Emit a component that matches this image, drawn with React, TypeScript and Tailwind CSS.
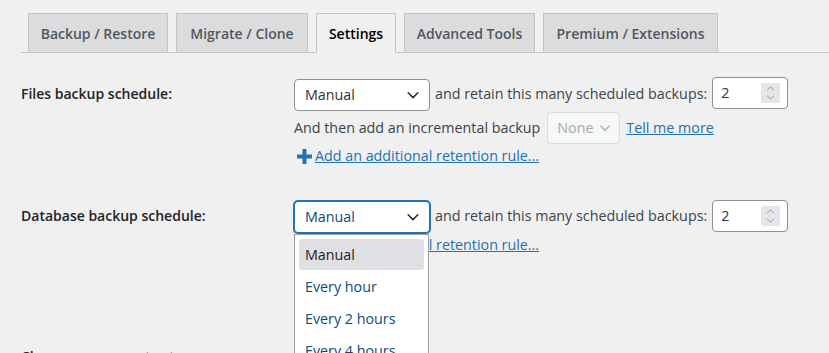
import React from "react";

const tabs = [
  { label: "Backup / Restore", w: "w-[140px]" },
  { label: "Migrate / Clone", w: "w-[132px]" },
  { label: "Settings", w: "w-[80px]", active: true },
  { label: "Advanced Tools", w: "w-[131px]" },
  { label: "Premium / Extensions", w: "w-[175px]" },
];

const Chevron = ({ className = "" }: { className?: string }) => (
  <svg viewBox="0 0 16 16" className={className} fill="none">
    <path d="M2.5 5.5 8 11l5.5-5.5" stroke="currentColor" strokeWidth="1.8" strokeLinecap="round" strokeLinejoin="round" />
  </svg>
);

const FakeSelect = ({ value, focused = false }: { value: string; focused?: boolean }) => (
  <div
    className={
      focused
        ? "flex items-center justify-between w-[136px] h-[32px] pl-[10px] pr-[9px] rounded-[4px] bg-white border border-[#2271b1] shadow-[0_0_0_1px_#2271b1] text-[#0a4b78]"
        : "flex items-center justify-between w-[136px] h-[32px] pl-[10px] pr-[9px] rounded-[4px] bg-white border border-[#8c8f94] text-[#2c3338]"
    }
  >
    <span>{value}</span>
    <Chevron className="w-[14px] h-[14px] text-[#2c3338]" />
  </div>
);

const NumberInput = () => (
  <div className="flex items-center justify-between w-[76px] h-[32px] pl-[8px] pr-[7px] rounded-[4px] bg-white border border-[#8c8f94] text-[#2c3338]">
    <span>2</span>
    <div className="flex flex-col items-center justify-center gap-[1px] w-[19px] h-[20px] bg-[#e6e6ea] text-[#8c8f94]">
      <svg viewBox="0 0 10 6" className="w-[9px] h-[5px]" fill="none">
        <path d="M1 5 5 1l4 4" stroke="currentColor" strokeWidth="1.2" />
      </svg>
      <svg viewBox="0 0 10 6" className="w-[9px] h-[5px] mt-[3px]" fill="none">
        <path d="M1 1l4 4 4-4" stroke="currentColor" strokeWidth="1.2" />
      </svg>
    </div>
  </div>
);

const PlusIcon = () => (
  <svg viewBox="0 0 15 15" className="w-[15px] h-[15px] text-[#2271b1]">
    <rect x="5.5" y="0" width="4" height="15" fill="currentColor" />
    <rect x="0" y="5.5" width="15" height="4" fill="currentColor" />
  </svg>
);

const options = ["Manual", "Every hour", "Every 2 hours", "Every 4 hours"];

export default function App() {
  return (
    <div className="h-[353px] overflow-hidden bg-[#f0f0f1] text-[14.3px] text-[#3c434a] font-['Open_Sans',sans-serif]">
      {/* tabs */}
      <nav className="ml-[21px] pt-[13px] pl-[7px] flex gap-[8px] border-b border-[#c3c4c7] text-[14px]">
        {tabs.map((t) =>
          t.active ? (
            <div
              key={t.label}
              className={`${t.w} h-[40px] -mb-px flex items-center justify-center border border-[#c3c4c7] border-b-[#f0f0f1] bg-[#f0f0f1] text-black font-semibold`}
            >
              {t.label}
            </div>
          ) : (
            <div
              key={t.label}
              className={`${t.w} h-[39px] flex items-center justify-center border border-b-0 border-[#c3c4c7] bg-[#dcdcde] text-[#50575e] font-semibold`}
            >
              {t.label}
            </div>
          )
        )}
      </nav>

      <div className="pl-[21px]">
        {/* Files backup schedule */}
        <div className="flex mt-[24px]">
          <div className="w-[273px] pt-[7px] leading-[20px] text-[14px] font-semibold text-[#1d2327]">Files backup schedule:</div>
          <div className="flex flex-col">
            <div className="flex items-start h-[34px]">
              <div className="mt-[2px]">
                <FakeSelect value="Manual" />
              </div>
              <span className="ml-[5px] mt-[1px] leading-[32px]">and retain this many scheduled backups:</span>
              <div className="ml-[5px]">
                <NumberInput />
              </div>
            </div>
            <div className="flex items-center h-[32px] mt-[1px]">
              <span>And then add an incremental backup</span>
              <div className="ml-[7px] flex items-center justify-between w-[73px] h-[32px] pl-[9px] pr-[8px] rounded-[4px] bg-[#f6f7f7] border border-[#dcdcde] text-[#a7aaad]">
                <span>None</span>
                <Chevron className="w-[12px] h-[12px]" />
              </div>
              <a href="#" className="ml-[6px] text-[#2271b1] underline">Tell me more</a>
            </div>
            <div className="flex items-center h-[20px] mt-[2px]">
              <span className="ml-[3px] mr-[3px]"><PlusIcon /></span>
              <a href="#" className="text-[#2271b1] underline leading-[20px]">Add an additional retention rule...</a>
            </div>
          </div>
        </div>

        {/* Database backup schedule */}
        <div className="flex mt-[34px]">
          <div className="w-[273px] pt-[6px] leading-[20px] text-[14px] font-semibold text-[#1d2327]">Database backup schedule:</div>
          <div className="flex flex-col">
            <div className="flex items-start h-[34px]">
              <div className="relative mt-[1px] z-10">
                <FakeSelect value="Manual" focused />
                <ul className="absolute left-0 top-[33px] w-[135px] h-[140px] bg-white border border-[#a0a0a0] p-[4px] pt-[4px]">
                  {options.map((o, i) => (
                    <li
                      key={o}
                      className={
                        i === 0
                          ? "h-[31px] mb-[1px] flex items-center pl-[6px] rounded-[3px] bg-[#e0dfe4] text-[#1d2327]"
                          : "h-[32px] flex items-center pl-[6px] text-[#0a4b78]"
                      }
                    >
                      {o}
                    </li>
                  ))}
                </ul>
              </div>
              <span className="ml-[5px] leading-[32px]">and retain this many scheduled backups:</span>
              <div className="ml-[5px]">
                <NumberInput />
              </div>
            </div>
            <div className="flex items-center h-[20px] mt-[1px]">
              <span className="ml-[3px] mr-[3px]"><PlusIcon /></span>
              <a href="#" className="text-[#2271b1] underline leading-[20px]">Add an additional retention rule...</a>
            </div>
          </div>
        </div>

        {/* Next row, cut off */}
        <div className="mt-[92px] leading-[20px] text-[14px] font-semibold text-[#1d2327]">Choose your remote storage</div>
      </div>
    </div>
  );
}
